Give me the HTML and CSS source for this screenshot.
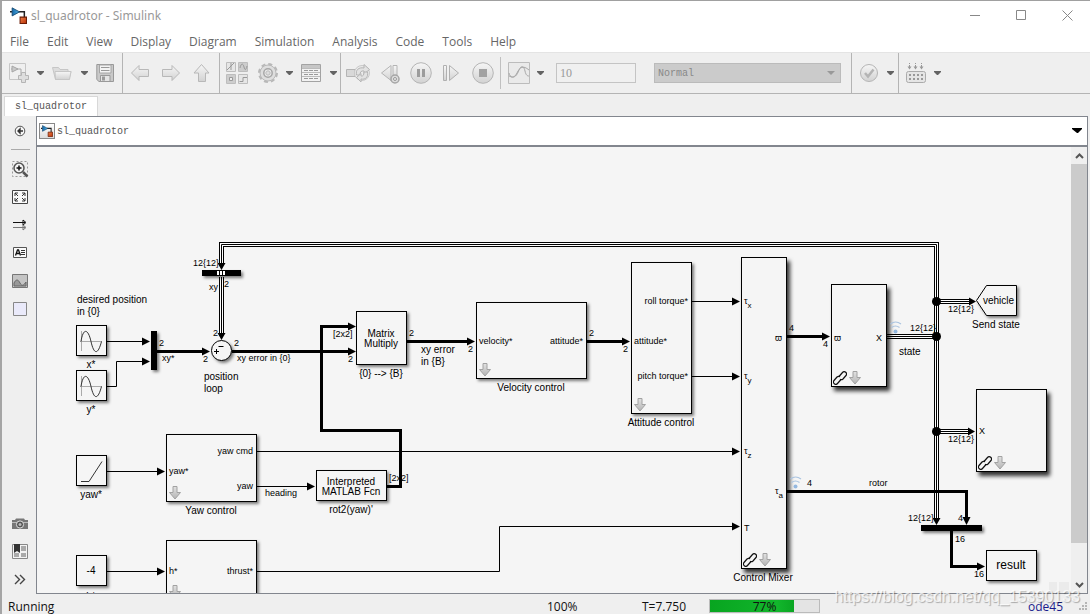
FILE: index.html
```html
<!DOCTYPE html>
<html lang="en">
<head>
<meta charset="utf-8">
<title>sl_quadrotor - Simulink</title>
<link rel="stylesheet" href="styles.css">
</head>
<body>
<svg class="defs" aria-hidden="true">
  <defs>
    <linearGradient id="metal" x1="0" y1="0" x2="0" y2="1"><stop offset="0" stop-color="#f6f6f6"/><stop offset="1" stop-color="#d2d2d2"/></linearGradient>
    <linearGradient id="steel" x1="0" y1="0" x2="0" y2="1"><stop offset="0" stop-color="#e2e2e2"/><stop offset="1" stop-color="#b4b4b4"/></linearGradient>
    <linearGradient id="blue" x1="0" y1="0" x2="1" y2="0"><stop offset="0" stop-color="#1668a8"/><stop offset="1" stop-color="#55b4e8"/></linearGradient>
    <linearGradient id="orange" x1="0" y1="0" x2="1" y2="1"><stop offset="0" stop-color="#f08048"/><stop offset="1" stop-color="#b83208"/></linearGradient>
    <symbol id="logo" viewBox="0 0 16 16">
      <path d="M0 4.5h2M8 4.5h5.5V10" fill="none" stroke="#222" stroke-width="1.4"/>
      <path d="M2 .8v7.6l7-3.8z" fill="url(#blue)" stroke="#12476f" stroke-width=".8"/>
      <path d="M9.5 9.5h6v6h-6z" fill="url(#orange)" stroke="#6b1c05"/>
    </symbol>
    <symbol id="caret" viewBox="0 0 8 6"><path d="M0 1h7v1L4 5H3L0 2z" fill="#636363"/></symbol>
    <symbol id="open" viewBox="0 0 12 14"><path d="M4 .5h4v6h3.5L6 13 .5 6.500H4z" fill="url(#steel)" stroke="#a2a2a2"/></symbol>
    <symbol id="link" viewBox="0 0 14 14">
      <g fill="none" stroke="#111" stroke-width="1.200"><path d="M6 5.500L9.500 1.500Q11-.2 12.700 1.300T13 4.500L10 8Q8.500 9.300 7 8.200M8 8.500L4.500 12.500Q3 14.200 1.300 12.700T1 9.500L4 6Q5.500 4.700 7 5.800"/></g>
    </symbol>
    <symbol id="signal" viewBox="0 0 12 13"><circle cx="5.500" cy="10.500" r="2" fill="#94b8e0"/><path d="M1.500 6.500q4-3 8 0M.5 3Q5.500-1 11 3" fill="none" stroke="#a9c3e0" stroke-width="1.200"/></symbol>
    <marker id="tip" markerUnits="userSpaceOnUse" markerWidth="8" markerHeight="9" refX="1" refY="4.500" orient="auto"><path d="M0 .5L8 4.500 0 8.500z"/></marker>
    <filter id="soft" x="-20%" y="-20%" width="150%" height="150%"><feDropShadow dx="2" dy="2" stdDeviation="1.500" flood-color="#000" flood-opacity=".5"/></filter>
    <filter id="deep" x="-20%" y="-20%" width="150%" height="150%"><feDropShadow dx="3" dy="4" stdDeviation="2" flood-color="#000" flood-opacity=".8"/></filter>
  </defs>
</svg>

<div class="window">
  <header class="titlebar">
    <svg class="logo" width="17" height="17"><use href="#logo"/></svg>
    <h1>sl_quadrotor - Simulink</h1>
    <div class="window-buttons">
      <button aria-label="Minimize"><svg width="11" height="11"><path d="M0 5.500h10"/></svg></button>
      <button aria-label="Maximize"><svg width="11" height="11"><path d="M.5 .5h9v9h-9z"/></svg></button>
      <button aria-label="Close"><svg width="11" height="11"><path d="M.5 .5l10 10M10.500 .5l-10 10"/></svg></button>
    </div>
  </header>

  <nav class="menubar">
    <button>File</button><button>Edit</button><button>View</button><button>Display</button><button>Diagram</button><button>Simulation</button><button>Analysis</button><button>Code</button><button>Tools</button><button>Help</button>
  </nav>

  <div class="toolbar">
    <div class="group">
      <button class="tool" aria-label="New"><svg viewBox="0 0 22 22"><path d="M1.500 1.500h16v16h-16z" fill="#efefef" stroke="#c6c6c6"/><path d="M3 7h10v6" fill="none" stroke="#a9a9a9"/><path d="M4 4v6l6-3z" fill="#c9c9c9" stroke="#a6a6a6"/><path d="M13.500 10.500h4v3h3v4h-3v3h-4v-3h-3v-4h3z" fill="#dedede" stroke="#b5b5b5"/></svg></button>
      <button class="drop" aria-label="New menu"><svg><use href="#caret"/></svg></button>
      <button class="tool" aria-label="Open"><svg viewBox="0 0 22 22"><path d="M.5 5.500h6l1.500 2h8v2H19l-2 8H3.500z" fill="#ddd" stroke="#c6c6c6"/><path d="M3 9.500h16l-1.500 8h-14z" fill="url(#metal)" stroke="#c6c6c6"/></svg></button>
      <button class="drop" aria-label="Open menu"><svg><use href="#caret"/></svg></button>
      <button class="tool" aria-label="Save"><svg viewBox="0 0 22 22"><path d="M.8 2.500h16.700v17H3L.8 17.500z" fill="#c9c9c9" stroke="#999"/><path d="M3.500 3h11.500v8H3.500z" fill="#f3f3f3" stroke="#a5a5a5"/><path d="M5 5.500h8.500M5 8.500h8.500" stroke="#999"/><path d="M4.500 13.500h9.500v6H4.500z" fill="#e4e4e4" stroke="#999"/><path d="M6 14.500h3v4H6z" fill="#999"/></svg></button>
    </div>
    <div class="group wide">
      <button class="tool" aria-label="Back"><svg viewBox="0 0 22 22"><path d="M2.500 11L10 3.500v4h9.500v7H10v4z" fill="url(#metal)" stroke="#b8b8b8"/></svg></button>
      <button class="tool" aria-label="Forward"><svg viewBox="0 0 22 22"><path d="M19.500 11L12 3.500v4H2.500v7H12v4z" fill="url(#metal)" stroke="#b8b8b8"/></svg></button>
      <button class="tool" aria-label="Up"><svg viewBox="0 0 22 22"><path d="M10.500 2.500L18 11h-3.500v8.500h-7V11H3z" fill="url(#metal)" stroke="#b8b8b8"/></svg></button>
    </div>
    <div class="group library">
      <button class="tool big" aria-label="Library browser"><svg viewBox="0 0 24 24"><g fill="#e6e6e6" stroke="#bdbdbd"><path d="M.5 1.500h9v9h-9zM12.500 1.500h9v9h-9zM.5 13.500h9v9h-9zM12.500 13.500h9v9h-9z"/></g><path d="M13 2h8v8h-8zM1 14h8v8H1z" fill="#cdcdcd"/><path d="M1 9l7-7M5 2v7M14 7c1-5 3-5 4-1s2 3 3-1M13.500 20.500h3.500v-4h4" fill="none" stroke="#999"/><path d="M3.500 16.500h3v3h-3z" fill="#eee" stroke="#999"/></svg></button>
      <button class="tool" aria-label="Model settings"><svg viewBox="0 0 22 22"><circle cx="11" cy="11" r="9" fill="none" stroke="#b8b8b8" stroke-width="2" stroke-dasharray="4.070 3"/><circle cx="11" cy="11" r="8" fill="#dedede" stroke="#b8b8b8"/><circle cx="11" cy="11" r="4.200" fill="#efefef" stroke="#a6a6a6" stroke-width="1.500"/><circle cx="11" cy="11" r="2.200" fill="#ddd" stroke="#bbb"/></svg></button>
      <button class="drop" aria-label="Settings menu"><svg><use href="#caret"/></svg></button>
      <button class="tool" aria-label="Model explorer"><svg viewBox="0 0 22 22"><path d="M.5 2.500h19v17H.5z" fill="#f2f2f2" stroke="#a3a3a3"/><path d="M1 3h18v3H1z" fill="#c6c6c6"/><path d="M1 6.500h18M1 10.500h18M1 14.500h18" stroke="#bbb"/><path d="M3 8.500h14M3 12.500h14M3 16.500h14" stroke="#999" stroke-dasharray="4 1"/></svg></button>
      <button class="drop" aria-label="Explorer menu"><svg><use href="#caret"/></svg></button>
    </div>
    <div class="group simulate">
      <div class="steps">
        <button class="tool big" aria-label="Fast restart"><svg viewBox="0 0 24 24"><path d="M.5 8.500H9v7H.5z" fill="#d8d8d8" stroke="#b4b4b4"/><circle cx="16" cy="12" r="7.500" fill="#ebebeb" stroke="#c8c8c8"/><path d="M10.500 14c-1-5 2-8 7.500-7V3.500l5.500 5-5.500 4.500v-3c-3-.5-4 1-4 4z" fill="#e2e2e2" stroke="#b4b4b4"/><path d="M21.500 11c1 5-2 8-6.500 7v3l-4.500-4.500 4.500-4v2.500c2 .5 3-1 3-4z" fill="#e2e2e2" stroke="#b4b4b4"/></svg></button>
        <button class="tool" aria-label="Step back"><svg viewBox="0 0 22 22"><path d="M2.500 11L12 3.500v15zM14 3.500h4V17h-4z" fill="url(#metal)" stroke="#b4b4b4"/><circle cx="16" cy="17" r="4" fill="#ddd" stroke="#a6a6a6" stroke-width="1.500"/><circle cx="16" cy="17" r="1.500" fill="#eee" stroke="#999"/></svg></button>
        <button class="tool" aria-label="Pause"><svg viewBox="0 0 22 22"><circle cx="11" cy="11" r="10.300" fill="url(#metal)" stroke="#b5b5b5"/><path d="M7 7h3v8H7zM12 7h3v8h-3z" fill="#9c9c9c"/></svg></button>
        <button class="tool" aria-label="Step forward"><svg viewBox="0 0 22 22"><path d="M2.500 3.500h3v15h-3zM8.500 3.500l9 7.500-9 7.500z" fill="url(#metal)" stroke="#b0b0b0"/></svg></button>
        <button class="tool" aria-label="Stop"><svg viewBox="0 0 22 22"><circle cx="11" cy="11" r="10.300" fill="url(#metal)" stroke="#b5b5b5"/><path d="M7 7h8v8H7z" fill="#a2a2a2"/></svg></button>
      </div>
      <span class="divider"></span>
      <button class="tool big" aria-label="Data inspector"><svg viewBox="0 0 24 24"><path d="M1.500 1.500h21v21h-21z" fill="#eaeaea" stroke="#bcbcbc"/><path d="M2 12c1 5 5 6 8 0s6-8 12-3M2 15c6 3 8-1 10-6s5-4 6 1 3 5 4 5" fill="none" stroke="#a8a8a8"/></svg></button>
      <button class="drop" aria-label="Inspector menu"><svg><use href="#caret"/></svg></button>
      <input class="stop-time" type="text" value="10" aria-label="Stop time">
      <select class="mode" aria-label="Simulation mode"><option>Normal</option></select>
    </div>
    <div class="group check">
      <button class="tool" aria-label="Check model"><svg viewBox="0 0 22 22"><circle cx="11" cy="11" r="8.500" fill="url(#metal)" stroke="#b5b5b5"/><path d="M7 11l3 3.500 5.500-7" fill="none" stroke="#b4b4b4" stroke-width="2.500"/></svg></button>
      <button class="drop" aria-label="Check menu"><svg><use href="#caret"/></svg></button>
    </div>
    <div class="group last">
      <button class="tool" aria-label="Build"><svg viewBox="0 0 22 22"><path d="M4.500 1v5M10.500 1v5M16.500 1v5" stroke="#999" stroke-dasharray="1 1 3"/><path d="M2.500 4.500h4l-2 3zM8.500 4.500h4l-2 3zM14.500 4.500h4l-2 3z" fill="#999"/><rect x="1.500" y="9.500" width="19" height="11" rx="2" fill="#e5e5e5" stroke="#ababab"/><path d="M4 13h14M4 17h14" stroke="#999" stroke-width="2" stroke-dasharray="2"/></svg></button>
      <button class="drop" aria-label="Build menu"><svg><use href="#caret"/></svg></button>
    </div>
  </div>

  <div class="tabs"><button class="tab">sl_quadrotor</button></div>

  <main class="workspace">
    <aside class="palette">
      <button aria-label="Hide browser"><svg width="18" height="18"><circle cx="9" cy="9" r="4.800" fill="#f6f6f6" stroke="#555"/><path d="M12 9H7M9 7L7 9l2 2z" fill="#333" stroke="#333" stroke-width="1.400"/></svg></button>
      <hr>
      <button aria-label="Zoom"><svg width="18" height="18"><path d="M1.500 1.500h15v15h-15z" fill="none" stroke="#999" stroke-dasharray="2"/><circle cx="8" cy="8" r="5" fill="#f3f3f3" stroke="#555" stroke-width="1.500"/><path d="M5.500 8h5M8 5.500v5" stroke="#111" stroke-width="1.500"/><path d="M12 12l4.500 4.500" stroke="#555" stroke-width="2.500"/></svg></button>
      <button aria-label="Fit to view"><svg width="18" height="18"><path d="M1.500 2.500h15v13h-15z" fill="#fafafa" stroke="#444"/><path d="M4 8V5h3M4 5l3 3M11 5h3v3M14 5l-3 3M4 10v3h3M4 13l3-3M14 10v3h-3M14 13l-3-3" fill="none" stroke="#333"/></svg></button>
      <button aria-label="Sample time"><svg width="18" height="18"><path d="M2 6.500h12M12 4l3 2.500L12 9z" stroke="#111" fill="#fff"/><path d="M2 11.500h12M12 9l3 2.500-3 2.500z" stroke="#777" fill="#eee"/></svg></button>
      <button aria-label="Annotation"><svg width="18" height="18"><path d="M2.500 3.500h13v10h-13z" fill="#fafafa" stroke="#555"/><path d="M4.500 11.500L6.500 6h1l2 5.500M5.500 9.500h3" fill="none" stroke="#111" stroke-width="1.300"/><path d="M10 6.500h4M10 8.500h4M10 10.500h4" stroke="#333"/></svg></button>
      <button aria-label="Image"><svg width="18" height="18"><path d="M1.500 2.500h15v13h-15z" fill="#c4c4c4" stroke="#777"/><path d="M3 11c2-4 4-4 6 0s4 2 6-1v4H3z" fill="#999" stroke="#666"/></svg></button>
      <button aria-label="Area"><svg width="18" height="18"><path d="M2.500 2.500h13v13h-13z" fill="#eaeafa" stroke="#888"/></svg></button>
      <span class="fill"></span>
      <button aria-label="Screenshot"><svg width="18" height="18"><path d="M1 5h3l1-1.500h8L14 5h3v9H1z" fill="#777"/><path d="M1 7.500h16" stroke="#bbb"/><circle cx="9" cy="9.500" r="3.600" fill="#555" stroke="#ddd"/><circle cx="9" cy="9.500" r="1.500" fill="#bbb"/></svg></button>
      <button aria-label="Bookmarks"><svg width="18" height="18"><path d="M1.500 1.500h15v14h-15z" fill="#f3f3f3" stroke="#888"/><path d="M10 3h5v5h-5zM3 10h5v4H3zM10 10h5v4h-5z" fill="#aaa"/><path d="M3 1h6v9L6 8l-3 2z" fill="#333"/></svg></button>
      <button aria-label="More"><svg width="18" height="18"><path d="M4 4l4.500 4.500L4 13M9 4l4.500 4.500L9 13" fill="none" stroke="#444" stroke-width="1.400"/></svg></button>
    </aside>

    <section class="editor">
      <div class="breadcrumb">
        <span class="model-icon"><svg width="12" height="12"><use href="#logo"/></svg></span>
        <a href="#">sl_quadrotor</a>
        <button class="history" aria-label="History"><svg width="10" height="6"><path d="M0 0h10v1L6 5H5L0 1z"/></svg></button>
      </div>
      <div class="view">
        <div class="canvas">
          <svg class="diagram" width="1200" height="600" viewBox="37 147 1200 600" role="img" aria-label="Quadrotor model">
            <g class="bus">
              <path d="M221.500 263V244.500H936.500V519M221.500 277V333M887 336.500H936.500M936.500 301.500H969M936.500 431.500H968"/>
              <path class="mid" d="M221.500 263V244.500H936.500V519M221.500 277V333M887 336.500H936.500M936.500 301.500H969M936.500 431.500H968"/>
              <path class="core" d="M221.500 263V244.500H936.500V519M221.500 277V333M887 336.500H936.500M936.500 301.500H969M936.500 431.500H968"/>
            </g>
            <g class="heads">
              <path d="M217.500 263h8l-4 7zM217.500 333h8l-4 7zM932.500 518h8l-4 7zM969 297.500v8l7-4zM968 427.500v8l7-4z"/>
              <circle cx="936.500" cy="301.500" r="4.500"/><circle cx="936.500" cy="336.500" r="4.500"/><circle cx="936.500" cy="431.500" r="4.500"/>
            </g>
            <g class="thin">
              <path d="M107 341.500H143"/><path d="M107 386.500H116.500V361.500H143"/><path d="M107 471.500H158"/><path d="M107 571.500H158"/>
              <path d="M257 486.500H308"/><path d="M257 451.500H733"/><path d="M257 571.500H499.500V526.500H733"/><path d="M692 301.500H733"/><path d="M692 376.500H733"/>
            </g>
            <g class="thick">
              <path d="M157 351.500H203"/><path d="M232 351.500H349"/><path d="M387 486.500H400.500V430.500H321.500V326.500H349"/><path d="M407 341.500H468"/><path d="M587 341.500H623"/><path d="M787 336.500H823"/><path d="M787 491.500H966.500V518"/><path d="M951.500 531V566.500H978"/>
            </g>

            <g class="block soft">
              <rect x="76.500" y="325.500" width="30" height="30"/><rect x="76.500" y="370.500" width="30" height="30"/><rect x="76.500" y="455.500" width="30" height="30"/><rect x="76.500" y="555.500" width="30" height="30"/>
              <circle cx="221.500" cy="350.500" r="10"/>
              <rect x="356.500" y="311.500" width="50" height="53"/><rect x="476.500" y="302.500" width="110" height="76"/><rect x="631.500" y="262.500" width="60" height="151"/>
              <rect x="166.500" y="434.500" width="90" height="67"/><rect x="166.500" y="540.500" width="90" height="80"/><rect x="316.500" y="470.500" width="70" height="30"/>
              <rect x="986.500" y="550.500" width="50" height="30"/><path d="M976.500 300.500L986.500 285.500H1016.500V315.500H986.500z"/>
              <path class="bar" d="M151 331h6v39h-6zM202 270h39v6h-39zM921 525h61v6h-61z"/>
            </g>
            <g class="block deep">
              <rect x="741.500" y="257.500" width="45" height="311"/><rect x="831.500" y="284.500" width="55" height="102"/><rect x="976.500" y="389.500" width="70" height="82"/>
            </g>
            <path d="M217 271h8v4h-8z" fill="#fff"/><path d="M219.500 271v4M222.500 271v4" stroke="#000"/>

            <g fill="none" stroke="#aaa"><path d="M81.500 331v20M80 341.500h22M81.500 376v20M80 386.500h22"/></g>
            <g fill="none" stroke="#333"><path d="M81 341.500C83 328 88 328 91 341.500S98 355 101.500 341.500M81 386.500C83 373 88 373 91 386.500S98 400 101.500 386.500M81 481.500h8l13-20"/></g>
            <path d="M218.500 346.500h5M214 351.500h5M216.500 349v5" stroke="#000" fill="none"/>
            <use href="#open" x="479" y="363" width="12" height="14"/><use href="#open" x="634" y="398" width="12" height="14"/><use href="#open" x="169" y="486" width="12" height="14"/><use href="#open" x="169" y="585" width="12" height="14"/><use href="#open" x="759" y="553" width="12" height="14"/><use href="#open" x="849" y="371" width="12" height="14"/><use href="#open" x="994" y="456" width="12" height="14"/>
            <use href="#link" x="743" y="553" width="14" height="14"/><use href="#link" x="833" y="371" width="14" height="14"/><use href="#link" x="978" y="456" width="14" height="14"/>
            <use href="#signal" x="790" y="476" width="12" height="13"/><use href="#signal" x="890" y="321" width="12" height="13"/>

            <g class="name">
              <text x="77" y="303">desired position</text><text x="77" y="315">in {0}</text><text x="204" y="380">position</text><text x="204" y="392">loop</text><text x="421" y="353">xy error</text><text x="421" y="365">in {B}</text><text x="899" y="355">state</text><text x="983" y="304">vehicle</text>
            </g>
            <g class="name middle">
              <text x="91" y="368">x*</text><text x="91" y="413">y*</text><text x="91" y="498">yaw*</text><text x="91" y="600">h*</text><text x="91" y="574">-4</text>
              <text x="381" y="337">Matrix</text><text x="381" y="347">Multiply</text><text x="381" y="377">{0} --&gt; {B}</text><text x="531" y="391">Velocity control</text><text x="661" y="426">Attitude control</text><text x="763" y="581">Control Mixer</text><text x="996" y="328">Send state</text><text x="211" y="514">Yaw control</text><text x="351" y="485">Interpreted</text><text x="351" y="495">MATLAB Fcn</text><text x="351" y="513">rot2(yaw)'</text><text class="large" x="1011" y="569">result</text>
            </g>
            <g class="port">
              <text x="479" y="344">velocity*</text><text x="634" y="344">attitude*</text><text x="169" y="474">yaw*</text><text x="169" y="574">h*</text>
              <text x="744" y="304">τ<tspan class="sub" dy="4">x</tspan></text><text x="744" y="379">τ<tspan class="sub" dy="4">y</tspan></text><text x="744" y="454">τ<tspan class="sub" dy="4">z</tspan></text><text x="775" y="494">τ<tspan class="sub" dy="4">a</tspan></text><text x="744" y="531">T</text>
              <text x="775" y="341">ϖ</text><text x="834" y="341">ϖ</text><text x="876" y="341">X</text><text x="979" y="434">X</text>
              <text x="159" y="346">2</text><text x="162" y="361">xy*</text><text x="203" y="362">2</text><text x="213" y="336">2</text><text x="234" y="346">2</text><text x="237" y="361">xy error in {0}</text><text x="348" y="362">2</text><text x="333" y="337">[2x2]</text>
              <text x="193" y="266">12{12}</text><text x="209" y="290">xy</text><text x="224" y="287">2</text><text x="409" y="336">2</text><text x="468" y="352">2</text><text x="589" y="336">2</text><text x="623" y="352">2</text><text x="789" y="331">4</text><text x="823" y="347">4</text><text x="910" y="331">12{12}</text><text x="948" y="312">12{12}</text><text x="948" y="442">12{12}</text><text x="807" y="486">4</text><text x="869" y="486">rotor</text><text x="908" y="521">12{12}</text><text x="958" y="521">4</text><text x="955" y="542">16</text><text x="974" y="577">16</text><text x="265" y="496">heading</text><text x="389" y="481">[2x2]</text>
            </g>
            <g class="port end">
              <text x="583" y="344">attitude*</text><text x="688" y="304">roll torque*</text><text x="688" y="379">pitch torque*</text><text x="253" y="454">yaw cmd</text><text x="253" y="489">yaw</text><text x="253" y="574">thrust*</text>
            </g>
            <path d="M1049 582h8v11h-8zM1059 582h10v11h-10z" fill="#ebebeb"/>
          </svg>
        </div>
        <div class="scrollbar">
          <button aria-label="Scroll up"><svg width="9" height="6"><path d="M1 5l3.500-3.500L8 5"/></svg></button>
          <span class="thumb"></span>
          <button aria-label="Scroll down"><svg width="9" height="6"><path d="M1 1l3.500 3.500L8 1"/></svg></button>
        </div>
      </div>
    </section>
  </main>

  <footer class="status">
    <span class="state">Running</span>
    <span class="zoom">100%</span>
    <span class="time">T=7.750</span>
    <div class="progress" role="progressbar" aria-valuenow="77" aria-valuemin="0" aria-valuemax="100"><span class="done" style="width:77%"></span><span class="percent">77%</span></div>
    <a class="solver" href="#">ode45</a>
    <svg class="grip" width="10" height="10"><path d="M7 1h2v2H7zM4 4h2v2H4zM7 4h2v2H7zM1 7h2v2H1zM4 7h2v2H4zM7 7h2v2H7z" fill="#b5b5b5"/></svg>
  </footer>
  <span class="watermark">https://blog.csdn.net/qq_15390133</span>
</div>
</body>
</html>
```
FILE: styles.css
```css
* { box-sizing: border-box; }
body { margin: 0; font-family: "Open Sans", "Noto Sans", sans-serif; font-size: 12px; color: #666; }
button { border: 0; padding: 0; background: none; font: inherit; color: inherit; display: flex; align-items: center; justify-content: center; }
a { text-decoration: none; color: inherit; }
.defs { position: absolute; width: 0; height: 0; }
.window { position: relative; height: 100vh; display: flex; flex-direction: column; overflow: hidden; background: #efefef; border-top: 1px solid #a0a0a0; border-left: 2px solid #a5a5a5; }

.titlebar { display: flex; align-items: center; height: 29px; padding-left: 8px; background: #fff; flex: none; }
.titlebar h1 { flex: 1; margin: 0 0 0 4px; font: 12px "Noto Sans", sans-serif; color: #999; }
.window-buttons { display: flex; }
.window-buttons button { width: 46px; height: 29px; }
.window-buttons svg { fill: none; stroke: #888; }

.menubar { display: flex; gap: 18px; height: 22px; padding-left: 8px; background: #fff; flex: none; }

.toolbar { display: flex; height: 42px; flex: none; border-top: 1px solid #e4e4e4; border-bottom: 1px solid #b4b4b4; }
.group { display: flex; align-items: center; gap: 7px; padding: 0 4px 0 6px; border-right: 1px solid #b4b4b4; flex: none; }
.group.wide { gap: 9px; padding-right: 6px; }
.group.library { padding-right: 2px; }
.group.simulate { flex: 1; gap: 6px; padding: 0 10px 0 5px; min-width: 0; }
.group.check { padding-right: 3px; }
.group.last { flex: 0 1 191px; border-right: 0; }
.steps { display: flex; align-items: center; gap: 9px; }
.tool { width: 22px; height: 22px; }
.tool svg { width: 22px; height: 22px; }
.tool.big, .tool.big svg { width: 24px; height: 24px; }
.drop { width: 8px; height: 22px; }
.drop svg { width: 8px; height: 6px; }
.divider { width: 1px; height: 32px; background: #c0c0c0; }
.stop-time { width: 80px; height: 20px; margin-left: 5px; padding: 0 3px; border: 1px solid #c4c4c4; background: #f0f0f0; font: 12px "Liberation Serif", serif; color: #999; }
.mode { flex: 1; min-width: 60px; height: 20px; margin-left: 12px; padding: 0 3px; appearance: none; border: 1px solid #bbb; border-radius: 0; font: 10px "Liberation Mono", monospace; color: #888; background: #cbcbcb url("data:image/svg+xml,%3Csvg xmlns='http://www.w3.org/2000/svg' width='8' height='6'%3E%3Cpath d='M0 1h8L4 5z' fill='%23999'/%3E%3C/svg%3E") no-repeat right 5px center; }

.tabs { display: flex; align-items: flex-end; height: 22px; flex: none; padding-left: 2px; }
.tab { height: 20px; padding: 0 10px; background: #fff; border: 1px solid #d8d8d8; border-bottom: 0; }
.tab, .breadcrumb { font: 10px "Liberation Mono", monospace; color: #555; }

.workspace { display: flex; flex: 1; min-height: 0; padding-right: 2px; }
.palette { width: 34px; flex: none; display: flex; flex-direction: column; align-items: center; padding: 1px 0 0 2px; }
.palette button { width: 28px; height: 28px; flex: none; }
.palette hr { width: 19px; margin: 4px 0 5px; border: 0; border-top: 1px solid #aaa; flex: none; }
.palette .fill { flex: 1; }

.editor { flex: 1; min-width: 0; display: flex; flex-direction: column; border: 1px solid #82868e; }
.breadcrumb { display: flex; align-items: center; height: 30px; flex: none; padding: 0 5px 0 2px; background: #fff; border-bottom: 2px solid #82868e; }
.model-icon { display: flex; align-items: center; justify-content: center; width: 16px; height: 16px; margin-right: 2px; border: 1px solid #888; background: linear-gradient(#fff, #ddd); }
.breadcrumb a { flex: 1; }

.view { flex: 1; min-height: 0; display: flex; }
.canvas { flex: 1; min-width: 0; overflow: hidden; background: #f5f5f5; }
.diagram { display: block; font-family: "Liberation Sans", Arial, sans-serif; }
.name { font-size: 10px; }
.port { font-size: 9px; }
.sub { font-size: 8px; }
.large { font-size: 12px; }
.middle { text-anchor: middle; }
.end { text-anchor: end; }
.bus path { fill: none; stroke: #000; stroke-width: 5px; }
.bus .mid { stroke: #fff; stroke-width: 3px; }
.bus .core { stroke: #000; stroke-width: 1px; }
.thin path, .thick path { fill: none; stroke: #000; marker-end: url(#tip); }
.thick path { stroke-width: 3px; }
.block { fill: #f5f5f5; stroke: #000; }
.block .bar { fill: #000; stroke: none; }
.soft { filter: url(#soft); }
.deep { filter: url(#deep); }

.scrollbar { width: 16px; flex: none; display: flex; flex-direction: column; background: #efefef; }
.scrollbar button { height: 17px; flex: none; }
.scrollbar svg { fill: none; stroke: #555; stroke-width: 2px; }
.thumb { height: 379px; flex: 0 1 auto; background: #cbcbcb; }
.scrollbar button:last-child { margin-top: auto; }

.status { display: flex; align-items: center; height: 20px; flex: none; padding: 4px 2px 0 6px; color: #111; }
.state { flex: 1; }
.zoom { width: 95px; }
.time { width: 67px; }
.progress { position: relative; width: 111px; height: 14px; border: 1px solid #bbb; background: #e4e4e4; }
.done { display: block; height: 100%; background: linear-gradient(90deg, #08a520, #12b62c 80%, #0aa522); }
.percent { position: absolute; inset: 0; display: flex; align-items: center; justify-content: center; }
.solver { margin-left: 208px; width: 50px; color: #1a1a8c; }
.watermark { position: absolute; right: 10px; bottom: 8px; font: 16px "Liberation Sans", sans-serif; color: rgba(255, 255, 255, .75); text-shadow: 1px 1px 1px rgba(0, 0, 0, .3); pointer-events: none; }
```
